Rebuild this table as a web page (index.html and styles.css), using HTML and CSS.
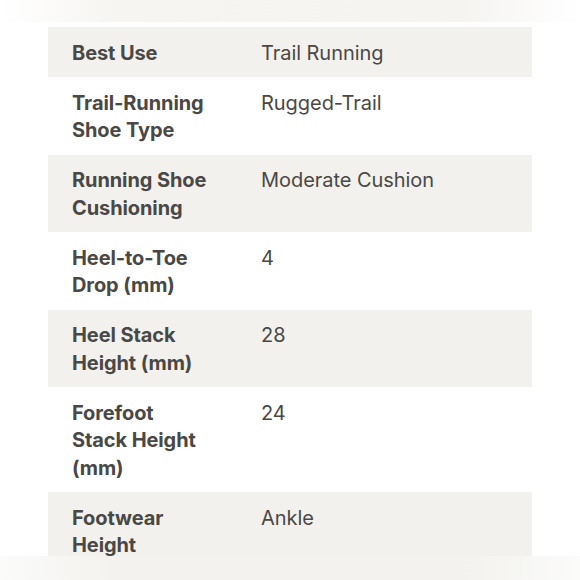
FILE: index.html
```html
<!DOCTYPE html>
<html>
<head>
<meta charset="utf-8">
<link rel="stylesheet" href="styles.css">
</head>
<body>
<div class="page">
  <div class="band band-top"></div>
  <div class="specs">
    <div class="row shaded"><div class="label">Best Use</div><div class="value">Trail Running</div></div>
    <div class="row"><div class="label">Trail-Running Shoe Type</div><div class="value">Rugged-Trail</div></div>
    <div class="row shaded"><div class="label">Running Shoe Cushioning</div><div class="value">Moderate Cushion</div></div>
    <div class="row"><div class="label">Heel-to-Toe Drop (mm)</div><div class="value">4</div></div>
    <div class="row shaded"><div class="label">Heel Stack Height (mm)</div><div class="value">28</div></div>
    <div class="row"><div class="label">Forefoot Stack Height (mm)</div><div class="value">24</div></div>
    <div class="row shaded"><div class="label">Footwear Height</div><div class="value">Ankle</div></div>
  </div>
  <div class="band band-bottom"></div>
</div>
</body>
</html>
```
FILE: styles.css
```css
html, body {
  margin: 0;
  padding: 0;
  background: #ffffff;
}
.page {
  width: 580px;
  height: 580px;
  overflow: hidden;
  position: relative;
  font-family: "Inter", "Liberation Sans", sans-serif;
  color: #4a4845;
}
.band {
  position: absolute;
  left: 0;
  width: 580px;
  z-index: 2;
}
.band-top {
  top: 0;
  height: 22px;
  background: linear-gradient(90deg, #ffffff 0%, #f6f5f2 20%, #f5f4f1 80%, #ffffff 100%);
}
.band-bottom {
  top: 556px;
  height: 24px;
  background: linear-gradient(90deg, #fbfbfa 0%, #f3f2ee 20%, #f3f2ee 80%, #fbfbfa 100%);
}
.specs {
  margin: 27px 48px 0 48px;
  display: flex;
  flex-direction: column;
}
.row {
  display: grid;
  grid-template-columns: 213px 1fr;
  padding: 12.5px 0 10px 0;
  font-size: 20px;
  line-height: 27.5px;
}
.row.shaded {
  background: #f2f1ed;
}
.label {
  padding: 0 0 0 24px;
  width: 136px;
  font-weight: 700;
  letter-spacing: -0.1px;
}
.value {
  padding-right: 24px;
  font-weight: 400;
  letter-spacing: -0.05px;
}
```
